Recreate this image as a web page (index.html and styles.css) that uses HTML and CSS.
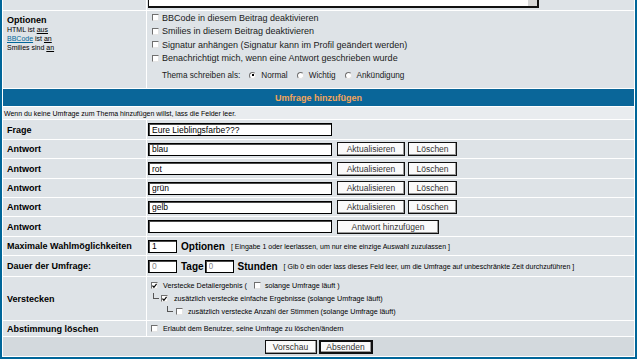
FILE: index.html
```html
<!DOCTYPE html>
<html lang="de">
<head>
    <meta charset="UTF-8">
    <meta name="viewport" content="width=device-width, initial-scale=1.0">
    <title>Neues Thema erstellen</title>
    <link rel="stylesheet" href="styles.css">
</head>
<body>
<form class="posting">
<table class="forumline">
    <tr class="msgrow">
        <td class="label top"></td>
        <td class="field">
            <div class="msgbox">
                <textarea class="msgtext" rows="10" cols="60"></textarea>
                <div class="scroll"><span class="scrollbtn"></span></div>
            </div>
        </td>
    </tr>
    <tr class="optrow">
        <td class="label top">
            <div class="optlabel">Optionen</div>
            <div class="gensmall">HTML ist <u>aus</u><br><a href="#">BBCode</a> ist <u>an</u><br>Smilies sind <u>an</u></div>
        </td>
        <td class="field top options">
            <div class="opt"><span class="cb"></span>BBCode in diesem Beitrag deaktivieren</div>
            <div class="opt"><span class="cb"></span>Smilies in diesem Beitrag deaktivieren</div>
            <div class="opt"><span class="cb"></span>Signatur anhängen (Signatur kann im Profil geändert werden)</div>
            <div class="opt"><span class="cb"></span>Benachrichtigt mich, wenn eine Antwort geschrieben wurde</div>
            <div class="opt thema">Thema schreiben als:<span class="rb on"></span>Normal<span class="rb"></span>Wichtig<span class="rb"></span>Ankündigung</div>
        </td>
    </tr>
    <tr class="headrow">
        <th colspan="2" class="thead">Umfrage hinzufügen</th>
    </tr>
    <tr class="inforow">
        <td colspan="2" class="info">Wenn du keine Umfrage zum Thema hinzufügen willst, lass die Felder leer.</td>
    </tr>
    <tr class="h19">
        <td class="label">Frage</td>
        <td class="field"><input class="post wide" type="text" value="Eure Lieblingsfarbe???"></td>
    </tr>
    <tr class="h18">
        <td class="label">Antwort</td>
        <td class="field"><div class="line"><input class="post wide" type="text" value="blau"><button type="button" class="btn upd">Aktualisieren</button><button type="button" class="btn del">Löschen</button></div></td>
    </tr>
    <tr class="h19">
        <td class="label">Antwort</td>
        <td class="field"><div class="line"><input class="post wide" type="text" value="rot"><button type="button" class="btn upd">Aktualisieren</button><button type="button" class="btn del">Löschen</button></div></td>
    </tr>
    <tr class="h18">
        <td class="label">Antwort</td>
        <td class="field"><div class="line"><input class="post wide" type="text" value="grün"><button type="button" class="btn upd">Aktualisieren</button><button type="button" class="btn del">Löschen</button></div></td>
    </tr>
    <tr class="h18">
        <td class="label">Antwort</td>
        <td class="field"><div class="line"><input class="post wide" type="text" value="gelb"><button type="button" class="btn upd">Aktualisieren</button><button type="button" class="btn del">Löschen</button></div></td>
    </tr>
    <tr class="h19">
        <td class="label">Antwort</td>
        <td class="field"><div class="line"><input class="post wide" type="text" value=""><button type="button" class="btn add">Antwort hinzufügen</button></div></td>
    </tr>
    <tr class="h18">
        <td class="label">Maximale Wahlmöglichkeiten</td>
        <td class="field"><div class="line"><input class="post short" type="text" value="1"><b class="unit">Optionen</b><span class="hint">[ Eingabe 1 oder leerlassen, um nur eine einzige Auswahl zuzulassen ]</span></div></td>
    </tr>
    <tr class="h20">
        <td class="label">Dauer der Umfrage:</td>
        <td class="field"><div class="line"><input class="post short grey" type="text" value="0"><b class="unit days">Tage</b><input class="post short grey" type="text" value="0"><b class="unit">Stunden</b><span class="hint">[ Gib 0 ein oder lass dieses Feld leer, um die Umfrage auf unbeschränkte Zeit durchzuführen ]</span></div></td>
    </tr>
    <tr class="hiderow">
        <td class="label">Verstecken</td>
        <td class="field hide">
            <div class="hline"><span class="cb first"><svg viewBox="0 0 6 6" width="6" height="6"><polyline points="0.5,2.5 2.3,4.5 5.5,0.5" /></svg></span>Verstecke Detailergebnis (<span class="cb mid"></span>solange Umfrage läuft )</div>
            <div class="hline"><span class="tree t1"></span><span class="cb sub1"><svg viewBox="0 0 6 6" width="6" height="6"><polyline points="0.5,2.5 2.3,4.5 5.5,0.5" /></svg></span>zusätzlich verstecke einfache Ergebnisse (solange Umfrage läuft)</div>
            <div class="hline"><span class="tree t2"></span><span class="cb sub2"></span>zusätzlich verstecke Anzahl der Stimmen (solange Umfrage läuft)</div>
        </td>
    </tr>
    <tr class="h15">
        <td class="label">Abstimmung löschen</td>
        <td class="field"><div class="hline"><span class="cb first"></span>Erlaubt dem Benutzer, seine Umfrage zu löschen/ändern</div></td>
    </tr>
    <tr class="h19">
        <td colspan="2" class="catbottom"><button type="button" class="btn main">Vorschau</button><button type="button" class="btn main send">Absenden</button></td>
    </tr>
</table>
</form>
</body>
</html>
```

FILE: styles.css
```css
body {
    margin: 0;
    background-color: #ffffff;
    font-family: "Liberation Sans", Arial, sans-serif;
    color: #000000;
}
.forumline {
    box-sizing: border-box;
    width: 637px;
    margin-top: -93px;
    border: 2px solid #006699;
    border-spacing: 1px;
    background-color: #ffffff;
    table-layout: fixed;
}
.forumline td {
    padding: 0;
    background-color: #dee3e7;
    font-size: 8.5px;
    vertical-align: middle;
}
.forumline td.label {
    width: 139px;
    padding-left: 4px;
    font-size: 9px;
    font-weight: bold;
}
.forumline td.top {
    vertical-align: top;
}
.forumline td.field {
    padding-left: 1px;
}

/* message box, only its lower edge is in view */
.msgrow td {
    padding-top: 3px;
    padding-bottom: 2px;
}
.msgbox {
    display: flex;
    box-sizing: border-box;
    width: 391px;
    height: 95px;
    border: 1px solid #111;
    border-width: 2px 2px 2px 1px;
    background-color: #ffffff;
}
.msgtext {
    flex: 1;
    border: none;
    resize: none;
    outline: none;
    font-size: 9px;
}
.scroll {
    display: flex;
    flex-direction: column;
    justify-content: flex-end;
    width: 9px;
    background-color: #ededed;
}
.scrollbtn {
    height: 7px;
    background-color: #d8d8d8;
    border-top: 1px solid #f4f4f4;
}

/* options */
.optrow {
    height: 77px;
}
.optlabel {
    padding-top: 4px;
    line-height: 10px;
}
.gensmall {
    font-size: 7px;
    font-weight: normal;
    line-height: 9px;
}
.gensmall a {
    color: #006699;
}
.options {
    padding-top: 4px;
}
.opt {
    display: flex;
    align-items: center;
    height: 13.5px;
    font-size: 9px;
    color: #1a1a1a;
}
.opt.thema {
    height: 14px;
    margin-top: 3px;
    padding-left: 14px;
    font-size: 8.2px;
}
.cb {
    display: inline-flex;
    align-items: center;
    justify-content: center;
    box-sizing: border-box;
    width: 7px;
    height: 7px;
    margin: 0 3px 0 4px;
    background-color: #ffffff;
    border: 1px solid;
    border-color: #6f6f6f #e4e4e4 #e4e4e4 #6f6f6f;
    flex: none;
}
.cb svg {
    fill: none;
    stroke: #000;
    stroke-width: 1.4;
}
.rb {
    position: relative;
    box-sizing: border-box;
    width: 7px;
    height: 7px;
    margin: 0 5px 0 9px;
    border-radius: 50%;
    border: 1px solid;
    border-color: #6f6f6f #e4e4e4 #e4e4e4 #6f6f6f;
    background-color: #ffffff;
    flex: none;
}
.rb.on::after {
    content: "";
    position: absolute;
    left: 1.5px;
    top: 1.5px;
    width: 2px;
    height: 2px;
    background-color: #000;
}

/* poll header */
.headrow {
    height: 17px;
}
.thead {
    padding: 0;
    background-color: #0a6699;
    color: #f4a55a;
    font-size: 9px;
    font-weight: bold;
    text-align: center;
}
.inforow {
    height: 12px;
}
.forumline td.info {
    padding-left: 1px;
    font-size: 7px;
    background-color: #e9ecef;
}
.h15 { height: 15px; }
.h18 { height: 18px; }
.h19 { height: 19px; }
.h20 { height: 20px; }
.hiderow { height: 43px; }

.line {
    display: flex;
    align-items: center;
}
.post {
    box-sizing: border-box;
    height: 13px;
    margin: 0;
    padding: 0 3px;
    border: 1px solid #000;
    box-shadow: inset 1px 1px 0 #4a4a4a;
    background-color: #ffffff;
    font-family: "Liberation Sans", Arial, sans-serif;
    font-size: 8.5px;
    color: #000;
    outline: none;
}
.post.wide {
    width: 184px;
}
.post.short {
    width: 29px;
}
.post.grey {
    color: #888;
}
.btn {
    box-sizing: border-box;
    height: 14px;
    margin: 0;
    padding: 0;
    border: 1px solid #111;
    box-shadow: inset -1px -1px 0 #9a9a9a;
    background-color: #fafafa;
    font-family: "Liberation Sans", Arial, sans-serif;
    font-size: 8.5px;
    color: #333;
}
.btn.upd {
    width: 68px;
    margin-left: 5px;
}
.btn.del {
    width: 49px;
    margin-left: 3px;
}
.btn.add {
    width: 102px;
    margin-left: 5px;
}
.unit {
    margin: 0 0 0 4px;
    font-size: 10px;
}
.unit.days {
    margin-right: 1px;
}
.hint {
    margin-left: 6px;
    font-size: 7px;
}

/* hide options */
.hide {
    padding-top: 1px;
}
.hline {
    display: flex;
    align-items: center;
    height: 13px;
    font-size: 7.2px;
}
.cb.first {
    margin: 0 5px 0 3px;
}
.cb.mid {
    margin: 0 4px 0 7px;
}
.cb.sub1 {
    margin: 0 6px 0 2px;
}
.cb.sub2 {
    margin: 0 5px 0 3px;
}
.tree {
    box-sizing: border-box;
    width: 6px;
    height: 6px;
    margin-top: -5px;
    border-left: 1px solid #555;
    border-bottom: 1px solid #555;
    flex: none;
}
.tree.t1 {
    margin-left: 5px;
}
.tree.t2 {
    margin-left: 19px;
}

.forumline td.catbottom {
    background-color: #d3d9dd;
    text-align: center;
}
.btn.main {
    width: 52px;
    height: 14px;
    margin: 0 1px;
}
.btn.send {
    width: 54px;
    border-width: 2px;
}
```
